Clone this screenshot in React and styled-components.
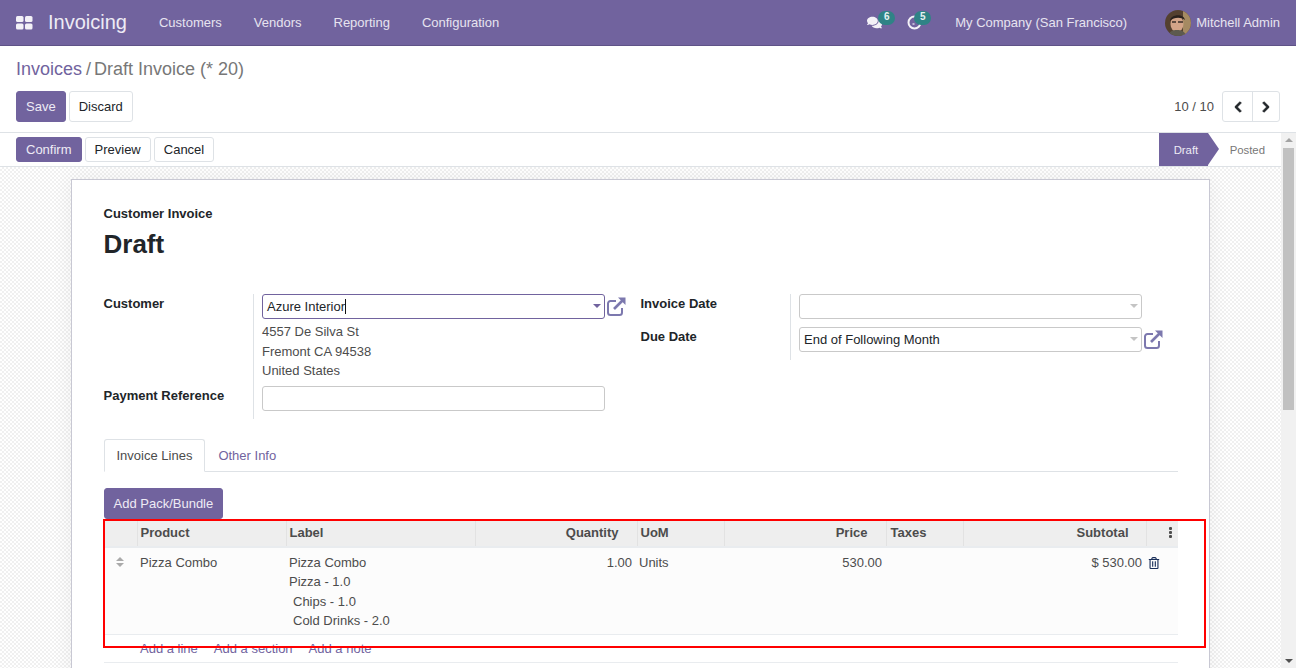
import styled, { createGlobalStyle } from "styled-components";
import { FaChevronLeft, FaChevronRight, FaComments, FaRegTrashAlt } from "react-icons/fa";

const GlobalStyle = createGlobalStyle`
  html, body {
    margin: 0;
    height: 100%;
    overflow: hidden;
    background: #fff;
    font-family: "Liberation Sans", Arial, sans-serif;
    font-size: 13px;
    color: #4c4c4c;
  }
  * { box-sizing: border-box; }
`;

const purple = "#71639e";

const Page = styled.div`
  display: flex;
  flex-direction: column;
  height: 100vh;
`;

const Navbar = styled.header`
  display: flex;
  align-items: center;
  flex: none;
  height: 46px;
  background: ${purple};
  border-bottom: 1px solid #5f5387;
  color: #e7e3f0;
  padding: 0 16px;
`;

const AppTitle = styled.span`
  font-size: 20px;
  color: #eeebf5;
  margin-left: 15px;
  margin-right: 16px;
`;

const NavLink = styled.span`
  margin: 0 16px;
  color: #e7e3f0;
`;

const NavRight = styled.div`
  margin-left: auto;
  display: flex;
  align-items: center;
`;

const Systray = styled.span`
  position: relative;
  display: flex;
  width: ${({ $w }) => $w}px;
  color: #f3f1f7;
  font-size: 15px;
`;

const Badge = styled.span`
  position: absolute;
  left: ${({ $left }) => $left}px;
  top: -4px;
  min-width: 17px;
  height: 14px;
  padding: 0 3px;
  border-radius: 7px;
  background: #2f8386;
  color: #e6f2f2;
  font-size: 10px;
  font-weight: bold;
  line-height: 12px;
  text-align: center;
`;

const Company = styled.span`
  margin-left: 3px;
  margin-right: 38px;
`;

const Avatar = styled.svg`
  width: 26px;
  height: 26px;
  margin-right: 5px;
  border-radius: 50%;
`;

const ControlPanel = styled.div`
  flex: none;
  height: 87px;
  padding: 0 16px;
  border-bottom: 1px solid #dee2e6;
`;

const Breadcrumb = styled.div`
  font-size: 18px;
  line-height: 21px;
  padding-top: 13px;
  height: 45px;
  color: #777;
  a { color: ${purple}; }
  i { font-style: normal; margin: 0 3px 0 4px; color: #777; }
`;

const PanelRow = styled.div`
  display: flex;
  align-items: center;
`;

const Button = styled.button`
  height: ${({ $small }) => ($small ? 25 : 31)}px;
  padding: 0 9px;
  margin-right: 3px;
  border-radius: 3px;
  font: 13px "Liberation Sans", Arial, sans-serif;
  border: 1px solid ${({ $primary }) => ($primary ? purple : "#dee2e6")};
  background: ${({ $primary }) => ($primary ? purple : "#fff")};
  color: ${({ $primary }) => ($primary ? "#eeebf5" : "#212529")};
`;

const Pager = styled.div`
  margin-left: auto;
  display: flex;
  align-items: center;
  color: #4c4c4c;
`;

const PagerButtons = styled.div`
  display: flex;
  margin-left: 8px;
  height: 31px;
  border: 1px solid #dee2e6;
  border-radius: 3px;
  color: #212529;
  font-size: 12px;
  span {
    display: flex;
    align-items: center;
    justify-content: center;
    width: 29px;
  }
  span + span { border-left: 1px solid #dee2e6; width: 27px; }
  svg { stroke: currentColor; stroke-width: 40; }
`;

const Body = styled.div`
  flex: 1;
  display: flex;
  min-height: 0;
`;

const View = styled.div`
  flex: 1;
  min-width: 0;
  display: flex;
  flex-direction: column;
`;

const Scrollbar = styled.div`
  flex: none;
  width: 15px;
  display: flex;
  flex-direction: column;
  align-items: center;
  background: #f1f1f1;
`;

const ScrollArrow = styled.div`
  width: 0;
  height: 0;
  flex: none;
  margin: ${({ $up }) => ($up ? "5px 0 6px" : "auto 0 5px")};
  border-left: 4px solid transparent;
  border-right: 4px solid transparent;
  ${({ $up }) => ($up ? "border-bottom: 4px solid #a3a3a3;" : "border-top: 4px solid #505050;")}
`;

const ScrollThumb = styled.div`
  width: 11px;
  height: 262px;
  flex: none;
  background: #c1c1c1;
`;

const StatusBar = styled.div`
  flex: none;
  display: flex;
  align-items: center;
  height: 34px;
  padding-left: 16px;
  border-bottom: 1px solid #dee2e6;
`;

const Steps = styled.div`
  margin-left: auto;
  display: flex;
  align-self: stretch;
  font-size: 11.375px;
`;

const ActiveStep = styled.div`
  position: relative;
  display: flex;
  align-items: center;
  width: 49px;
  padding-left: 15px;
  background: ${purple};
  color: #eeebf5;
  &::after {
    content: "";
    position: absolute;
    left: 100%;
    top: 0;
    border-left: 11px solid ${purple};
    border-top: 16.5px solid transparent;
    border-bottom: 16.5px solid transparent;
  }
`;

const Step = styled.div`
  display: flex;
  align-items: center;
  padding: 0 16px 0 22px;
  color: #777;
`;

const Content = styled.div`
  flex: 1;
  min-height: 0;
  overflow: hidden;
  padding: 12px 71px 0 71px;
  background-color: #fff;
  background-image: conic-gradient(#f0f0f0 25%, #fff 0 50%, #f0f0f0 0 75%, #fff 0);
  background-size: 4px 4px;
`;

const Sheet = styled.div`
  width: 1139px;
  min-height: 600px;
  padding: 25px 31px 0 31.5px;
  background: #fff;
  border: 1px solid #c8c8d3;
  box-shadow: 0 0 20px rgba(0, 0, 0, 0.06);
`;

const SheetSubtitle = styled.div`
  font-weight: bold;
  color: #212529;
  line-height: 17px;
`;

const SheetTitle = styled.h1`
  margin: 6px 0 34px;
  font-size: 26px;
  line-height: 32px;
  color: #212529;
`;

const FormGrid = styled.div`
  display: flex;
  align-items: flex-start;
`;

const Group = styled.div`
  width: 537px;
  flex: none;
  display: grid;
  grid-template-columns: 149.5px 1fr;
`;

const Label = styled.div`
  font-weight: bold;
  color: #212529;
  padding-top: 2px;
  height: ${({ $h }) => $h}px;
`;

const Field = styled.div`
  border-left: 1px solid #dee2e6;
  padding-left: 8px;
  padding-bottom: ${({ $pb }) => $pb || 8}px;
`;

const InputRow = styled.div`
  display: flex;
  align-items: center;
`;

const Input = styled.div`
  position: relative;
  width: 343px;
  height: 25px;
  padding: 0 4px;
  display: flex;
  align-items: center;
  border-radius: 3px;
  border: 1px solid ${({ $focus }) => ($focus ? purple : "#c9c9c9")};
  color: #212529;
  ${({ $arrow, $focus }) =>
    $arrow &&
    `&::after {
      content: "";
      position: absolute;
      right: 3px;
      top: 9px;
      border-left: 4px solid transparent;
      border-right: 4px solid transparent;
      border-top: 4px solid ${$focus ? purple : "#c4c4c4"};
    }`}
`;

const Caret = styled.span`
  width: 1px;
  height: 15px;
  background: #111;
`;

const LinkIcon = styled.svg`
  width: 21px;
  height: 21px;
  margin-left: 1px;
  flex: none;
  color: #7c78ae;
`;

const Address = styled.div`
  margin: 3px 0 4px;
  line-height: 19.5px;
  color: #4c4c4c;
`;

const Tabs = styled.div`
  display: flex;
  height: 33px;
  margin-top: 20px;
  border-bottom: 1px solid #dee2e6;
`;

const Tab = styled.div`
  height: 33px;
  display: flex;
  align-items: center;
  border-radius: 3px 3px 0 0;
  ${({ $active }) =>
    $active
      ? `padding: 0 12px; border: 1px solid #dee2e6; border-bottom-color: #fff; color: #4c4c4c; background: #fff;`
      : `color: ${purple}; padding: 0 13px;`}
`;

const AddBundle = styled(Button)`
  display: block;
  height: 31px;
  margin: 16px 0 1px;
`;

const TableWrap = styled.div`
  position: relative;
  margin-left: 0.5px;
`;

const Annotation = styled.div`
  position: absolute;
  left: -1px;
  top: -1px;
  width: 1103px;
  height: 129px;
  border: 2px solid #f00;
  pointer-events: none;
`;

const Table = styled.table`
  width: 1074px;
  table-layout: fixed;
  border-collapse: collapse;
`;

const Th = styled.th`
  height: 27px;
  padding: 0 ${({ $pr }) => $pr || 3}px 0 ${({ $pl }) => $pl || 3}px;
  background: #eee;
  color: #4c4c4c;
  font-size: 13px;
  text-align: ${({ $pr }) => ($pr ? "right" : "left")};
  border-left: 1px solid #e2e2e2;
  border-bottom: 2px solid #e9ecef;
  &:first-child { border-left: 0; }
`;

const Td = styled.td`
  vertical-align: top;
  height: 86px;
  padding: 5px ${({ $pr }) => $pr || 3}px 3px ${({ $pl }) => $pl || 3}px;
  background: #fcfcfc;
  line-height: 19.5px;
  text-align: ${({ $pr }) => ($pr ? "right" : "left")};
  border-bottom: 1px solid #e9ecef;
`;

const Handle = styled.div`
  display: flex;
  flex-direction: column;
  gap: 2px;
  align-items: center;
  padding-top: 4px;
  margin-left: -2px;
  span {
    width: 0;
    height: 0;
    border-left: 4px solid transparent;
    border-right: 4px solid transparent;
  }
  span:first-child { border-bottom: 4px solid #aaa; }
  span:last-child { border-top: 4px solid #aaa; }
`;

const Kebab = styled.div`
  display: flex;
  flex-direction: column;
  align-items: flex-end;
  gap: 1px;
  padding-right: 3px;
  span { width: 3px; height: 3px; background: #4c4c4c; border-radius: 1px; }
`;

const Trash = styled.div`
  color: #1a2f5a;
  font-size: 12px;
  padding-top: 4px;
  margin-left: -1px;
  line-height: 1;
`;

const Indented = styled.div`
  padding-left: 4px;
`;

const AddRow = styled.td`
  height: 28px;
  padding: 0 3px;
  color: ${purple};
  border-bottom: 1px solid #e9ecef;
  a { margin-right: 16px; }
`;

function LinkGlyph() {
  return (
    <LinkIcon viewBox="0 0 21 21" fill="none" stroke="currentColor" strokeWidth="2">
      <path d="M16 12v4.500a2.500 2.500 0 0 1-2.500 2.500h-9A2.500 2.500 0 0 1 2 16.500v-9A2.500 2.500 0 0 1 4.500 5H10" />
      <path d="M8 13 L17 4" strokeWidth="2.600" />
      <path d="M12 1.500h7.500V9z" fill="currentColor" stroke="none" />
    </LinkIcon>
  );
}

function AppsIcon() {
  return (
    <svg width="17" height="14" viewBox="0 0 17 14" fill="#f3f1f7">
      <rect x="0" y="0" width="7.500" height="6" rx="1.500" />
      <rect x="9" y="0" width="7.500" height="6" rx="1.500" />
      <rect x="0" y="7.500" width="7.500" height="6" rx="1.500" />
      <rect x="9" y="7.500" width="7.500" height="6" rx="1.500" />
    </svg>
  );
}

function ActivityIcon() {
  return (
    <svg width="15" height="15" viewBox="0 0 15 15" fill="none" stroke="#f3f1f7">
      <circle cx="7.500" cy="7.500" r="6" strokeWidth="2" />
      <path d="M5.500 9h2" strokeWidth="1.200" />
    </svg>
  );
}

function Portrait() {
  return (
    <Avatar viewBox="0 0 26 26">
      <rect width="26" height="26" fill="#54402f" />
      <rect x="18" width="8" height="26" fill="#a58a62" />
      <ellipse cx="12" cy="14" rx="6.500" ry="8" fill="#d3a488" />
      <path d="M5 11C5 4 19 3 20 10 16 7 9 7 5 11z" fill="#2a211c" />
      <path d="M7 12h4M13 12h5" stroke="#3a2e28" strokeWidth="1.300" />
      <path d="M3 26c1-5 5-6 9-6s8 1 9 6z" fill="#5d5a4e" />
    </Avatar>
  );
}

export default function App() {
  return (
    <Page>
      <GlobalStyle />
      <Navbar>
        <AppsIcon />
        <AppTitle>Invoicing</AppTitle>
        <NavLink>Customers</NavLink>
        <NavLink>Vendors</NavLink>
        <NavLink>Reporting</NavLink>
        <NavLink>Configuration</NavLink>
        <NavRight>
          <Systray $w={40}>
            <FaComments />
            <Badge $left={11}>6</Badge>
          </Systray>
          <Systray $w={45}>
            <ActivityIcon />
            <Badge $left={7}>5</Badge>
          </Systray>
          <Company>My Company (San Francisco)</Company>
          <Portrait />
          <span>Mitchell Admin</span>
        </NavRight>
      </Navbar>

      <ControlPanel>
        <Breadcrumb>
          <a>Invoices</a>
          <i>/</i>
          Draft Invoice (* 20)
        </Breadcrumb>
        <PanelRow>
          <Button $primary>Save</Button>
          <Button>Discard</Button>
          <Pager>
            10 / 10
            <PagerButtons>
              <span><FaChevronLeft /></span>
              <span><FaChevronRight /></span>
            </PagerButtons>
          </Pager>
        </PanelRow>
      </ControlPanel>

      <Body>
        <View>
          <StatusBar>
            <Button $primary $small>Confirm</Button>
            <Button $small>Preview</Button>
            <Button $small>Cancel</Button>
            <Steps>
              <ActiveStep>Draft</ActiveStep>
              <Step>Posted</Step>
            </Steps>
          </StatusBar>
          <Content>
            <Sheet>
              <SheetSubtitle>Customer Invoice</SheetSubtitle>
              <SheetTitle>Draft</SheetTitle>

              <FormGrid>
                <Group>
                  <Label $h={90}>Customer</Label>
                  <Field $pb={1}>
                    <InputRow>
                      <Input $focus $arrow>Azure Interior<Caret /></Input>
                      <LinkGlyph />
                    </InputRow>
                    <Address>
                      4557 De Silva St<br />
                      Fremont CA 94538<br />
                      United States
                    </Address>
                  </Field>
                  <Label $h={33}>Payment Reference</Label>
                  <Field>
                    <Input />
                  </Field>
                </Group>
                <Group>
                  <Label $h={33}>Invoice Date</Label>
                  <Field>
                    <Input $arrow />
                  </Field>
                  <Label $h={33}>Due Date</Label>
                  <Field>
                    <InputRow>
                      <Input $arrow>End of Following Month</Input>
                      <LinkGlyph />
                    </InputRow>
                  </Field>
                </Group>
              </FormGrid>

              <Tabs>
                <Tab $active>Invoice Lines</Tab>
                <Tab>Other Info</Tab>
              </Tabs>

              <AddBundle $primary>Add Pack/Bundle</AddBundle>

              <TableWrap>
                <Table>
                  <colgroup>
                    <col width="33" />
                    <col width="149" />
                    <col width="189" />
                    <col width="162" />
                    <col width="87" />
                    <col width="162" />
                    <col width="77" />
                    <col width="183" />
                    <col width="32" />
                  </colgroup>
                  <thead>
                    <tr>
                      <Th />
                      <Th>Product</Th>
                      <Th>Label</Th>
                      <Th $pr={18}>Quantity</Th>
                      <Th>UoM</Th>
                      <Th $pr={18}>Price</Th>
                      <Th $pl={4}>Taxes</Th>
                      <Th $pr={17}>Subtotal</Th>
                      <Th>
                        <Kebab><span /><span /><span /></Kebab>
                      </Th>
                    </tr>
                  </thead>
                  <tbody>
                    <tr>
                      <Td><Handle><span /><span /></Handle></Td>
                      <Td>Pizza Combo</Td>
                      <Td>
                        Pizza Combo<br />
                        Pizza - 1.0
                        <Indented>Chips - 1.0</Indented>
                        <Indented>Cold Drinks - 2.0</Indented>
                      </Td>
                      <Td $pr={5}>1.00</Td>
                      <Td $pl={2}>Units</Td>
                      <Td $pr={4}>530.00</Td>
                      <Td />
                      <Td $pr={4}>$ 530.00</Td>
                      <Td><Trash><FaRegTrashAlt /></Trash></Td>
                    </tr>
                    <tr>
                      <AddRow />
                      <AddRow colSpan={8}>
                        <a>Add a line</a>
                        <a>Add a section</a>
                        <a>Add a note</a>
                      </AddRow>
                    </tr>
                  </tbody>
                </Table>
                <Annotation />
              </TableWrap>
            </Sheet>
          </Content>
        </View>
        <Scrollbar>
          <ScrollArrow $up />
          <ScrollThumb />
          <ScrollArrow />
        </Scrollbar>
      </Body>
    </Page>
  );
}
